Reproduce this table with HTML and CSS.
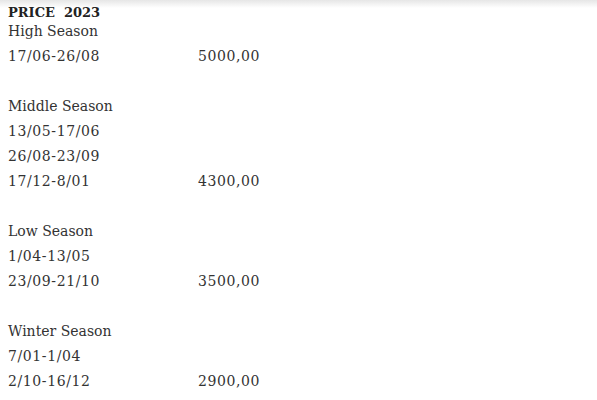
FILE: index.html
```html
<!DOCTYPE html>
<html>
<head>
<meta charset="utf-8">
<link rel="stylesheet" href="styles.css">
</head>
<body>
<div class="topbar"></div>
<div class="content">
  <div class="title">PRICE&nbsp; 2023</div>
  <div class="row"><span class="label">High Season</span></div>
  <div class="row"><span class="dates">17/06-26/08</span><span class="price">5000,00</span></div>
  <div class="row"></div>
  <div class="row"><span class="label">Middle Season</span></div>
  <div class="row"><span class="dates">13/05-17/06</span></div>
  <div class="row"><span class="dates">26/08-23/09</span></div>
  <div class="row"><span class="dates">17/12-8/01</span><span class="price">4300,00</span></div>
  <div class="row"></div>
  <div class="row"><span class="label">Low Season</span></div>
  <div class="row"><span class="dates">1/04-13/05</span></div>
  <div class="row"><span class="dates">23/09-21/10</span><span class="price">3500,00</span></div>
  <div class="row"></div>
  <div class="row"><span class="label">Winter Season</span></div>
  <div class="row"><span class="dates">7/01-1/04</span></div>
  <div class="row"><span class="dates">2/10-16/12</span><span class="price">2900,00</span></div>
</div>
</body>
</html>
```
FILE: styles.css
```css
html, body {
  margin: 0;
  padding: 0;
  background: #fff;
}
body {
  font-family: "DejaVu Serif", "Liberation Serif", serif;
  color: #333;
  font-size: 14px;
}
.topbar {
  height: 8px;
  background: linear-gradient(#e6e6e6, #fff);
}
.content {
  padding: 0 8px;
  margin-top: -2px;
}
.title {
  font-weight: bold;
  font-size: 13px;
  line-height: 13px;
  color: #222;
}
.row {
  display: flex;
  height: 25px;
  line-height: 25px;
}
.label,
.dates {
  width: 190px;
  flex: none;
}
.dates,
.price {
  letter-spacing: 0.6px;
}
.price {
  flex: none;
}
```
